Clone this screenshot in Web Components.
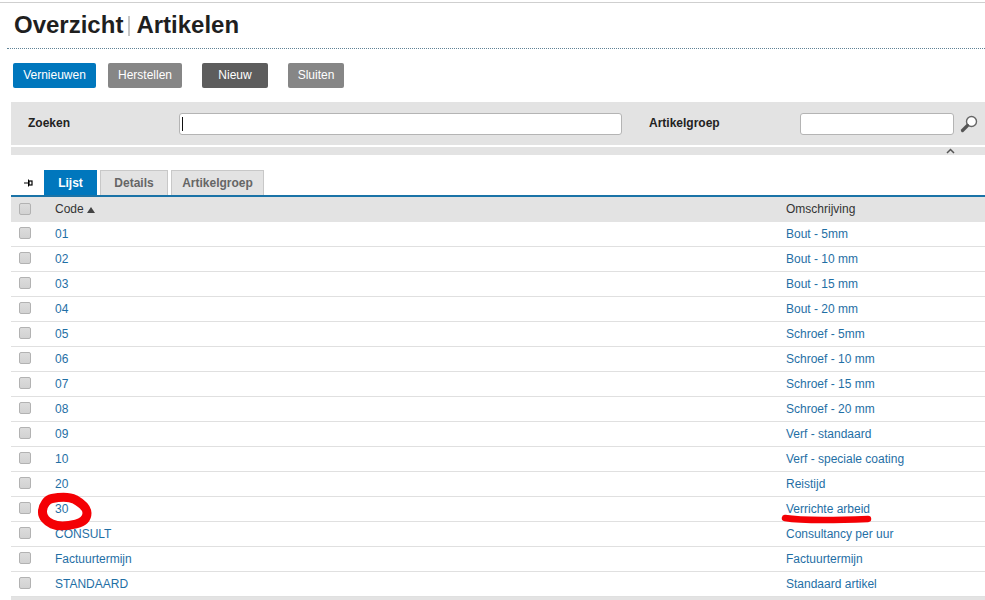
<!DOCTYPE html>
<html lang="nl">
<head>
<meta charset="utf-8">
<title>Overzicht Artikelen</title>
<style>
html, body { margin: 0; padding: 0; background: #fff; overflow: hidden; }
body { font-family: "Liberation Sans", Arial, sans-serif; font-size: 12px; color: #222; }
</style>
</head>
<body>
<artikel-page></artikel-page>
<script>
class PageTitle extends HTMLElement {
    constructor() {
        super();
        this.attachShadow({ mode: 'open' });
        this.shadowRoot.innerHTML = `
        <style>
        :host {
            display: block;
            height: 46px;
            margin-left: 7px;
            border-bottom: 1px dotted #5f8296;
            box-sizing: border-box;
        }
        h1 {
            display: flex;
            align-items: center;
            margin: 0;
            padding: 8px 0 0 7px;
            font-size: 24px;
            line-height: 28px;
            font-weight: bold;
            color: #1f1f1f;
        }
        i { display: block; width: 2px; height: 20px; background: #c6c6c6; margin: 2px 6px 0 5px; }
        </style>
        <h1><slot name="first"></slot><i></i><slot name="second"></slot></h1>`;
    }
}
customElements.define('page-title', PageTitle);

class ToolButton extends HTMLElement {
    constructor() {
        super();
        this.attachShadow({ mode: 'open' });
        this.shadowRoot.innerHTML = `
        <style>
        :host {
            display: flex;
            align-items: center;
            justify-content: center;
            height: 25px;
            box-sizing: border-box;
            border-radius: 2px;
            background: #868686;
            color: #fff;
            font-size: 12px;
            padding-bottom: 2px;
        }
        :host([kind="primary"]) { background: #0077bd; }
        :host([kind="dark"]) { background: #5d5d5d; }
        </style>
        <slot></slot>`;
    }
}
customElements.define('tool-button', ToolButton);

class SearchPanel extends HTMLElement {
    constructor() {
        super();
        this.attachShadow({ mode: 'open' });
        this.shadowRoot.innerHTML = `
        <style>
        :host { display: block; margin: 14px 0 0 11px; }
        .panel {
            height: 43px;
            background: #e3e3e3;
            display: flex;
            align-items: center;
            font-size: 12px;
            font-weight: bold;
            color: #222;
        }
        .lbl1 { width: 168px; padding-left: 17px; box-sizing: border-box; flex: none; margin-bottom: 1px; }
        .field {
            height: 22px;
            box-sizing: border-box;
            background: #fff;
            border: 1px solid #b4b4b4;
            border-radius: 3px;
            flex: none;
            padding: 3px 2px;
        }
        .field i { display: block; width: 1px; height: 14px; background: #111; }
        .wide { width: 443px; }
        .lbl2 { width: 178px; padding-left: 27px; box-sizing: border-box; flex: none; margin-bottom: 1px; }
        .narrow { width: 154px; }
        .lens { margin-left: 6px; flex: none; }
        .strip {
            height: 8px;
            margin-top: 2px;
            background: #e3e3e3;
            position: relative;
        }
        .caret { position: absolute; left: 935px; top: 1px; }
        </style>
        <div class="panel">
            <div class="lbl1">Zoeken</div>
            <div class="field wide"><i></i></div>
            <div class="lbl2">Artikelgroep</div>
            <div class="field narrow"></div>
            <svg class="lens" width="18" height="18" viewBox="0 0 18 18">
                <circle cx="11.5" cy="6.5" r="5" fill="#fff" stroke="#666" stroke-width="1.4"/>
                <path d="M7.5 10.5 L2.5 15.5" stroke="#555" stroke-width="3.2" stroke-linecap="round"/>
            </svg>
        </div>
        <div class="strip">
            <svg class="caret" width="9" height="6" viewBox="0 0 9 6"><path d="M1 5 L4.5 1.5 L8 5" fill="none" stroke="#555" stroke-width="1.5"/></svg>
        </div>`;
    }
}
customElements.define('search-panel', SearchPanel);

class TabBar extends HTMLElement {
    constructor() {
        super();
        this.attachShadow({ mode: 'open' });
        this.shadowRoot.innerHTML = `
        <style>
        :host {
            display: flex;
            align-items: flex-end;
            height: 27px;
            margin: 15px 0 0 11px;
            border-bottom: 2px solid #1a73a7;
            box-sizing: border-box;
        }
        .pin { width: 33px; height: 25px; display: flex; align-items: center; padding-left: 13px; box-sizing: border-box; flex: none; }
        .tab {
            height: 25px;
            box-sizing: border-box;
            display: flex;
            align-items: center;
            justify-content: center;
            font-size: 12px;
            font-weight: bold;
            color: #666;
            background: #e3e3e3;
            border: 1px solid #c8c8c8;
            border-bottom: 0;
            margin-right: 3px;
            flex: none;
        }
        .active { background: #0077bd; color: #fff; border-color: #0077bd; }
        </style>
        <div class="pin">
            <svg width="9" height="8" viewBox="0 0 9 8"><path d="M0 4 H4 M4.5 0.5 V7.5" fill="none" stroke="#000" stroke-width="1"/><rect x="5" y="2" width="3" height="4" fill="#fff" stroke="#000" stroke-width="1.2"/></svg>
        </div>
        <div class="tab active" style="width:53px">Lijst</div>
        <div class="tab" style="width:68px">Details</div>
        <div class="tab" style="width:93px">Artikelgroep</div>`;
    }
}
customElements.define('tab-bar', TabBar);

class RowCheck extends HTMLElement {
    constructor() {
        super();
        this.attachShadow({ mode: 'open' });
        this.shadowRoot.innerHTML = `
        <style>
        :host {
            display: block;
            width: 12px;
            height: 12px;
            box-sizing: border-box;
            border: 1px solid #b2b2b2;
            border-radius: 2px;
            background: linear-gradient(#dcdcdc, #d2d2d2);
        }
        </style>`;
    }
}
customElements.define('row-check', RowCheck);

class GridRow extends HTMLElement {
    constructor() {
        super();
        this.attachShadow({ mode: 'open' });
        this.shadowRoot.innerHTML = `
        <style>
        :host {
            display: grid;
            grid-template-columns: 44px 731px 1fr;
            align-items: center;
            height: 25px;
            box-sizing: border-box;
            border-bottom: 1px solid #e0e0e0;
            font-size: 12px;
            color: #1f6fa5;
        }
        :host([head]) {
            background: #e3e3e3;
            color: #333;
            border-bottom: 0;
        }
        :host([head]) .cell { margin-bottom: 2px; }
        row-check { margin-left: 8px; margin-bottom: 2px; }
        .cell { white-space: nowrap; }
        </style>
        <row-check></row-check>
        <div class="cell"><slot name="code"></slot></div>
        <div class="cell"><slot name="desc"></slot></div>`;
    }
}
customElements.define('grid-row', GridRow);

const ROWS = [
    ['01', 'Bout - 5mm'],
    ['02', 'Bout - 10 mm'],
    ['03', 'Bout - 15 mm'],
    ['04', 'Bout - 20 mm'],
    ['05', 'Schroef - 5mm'],
    ['06', 'Schroef - 10 mm'],
    ['07', 'Schroef - 15 mm'],
    ['08', 'Schroef - 20 mm'],
    ['09', 'Verf - standaard'],
    ['10', 'Verf - speciale coating'],
    ['20', 'Reistijd'],
    ['30', 'Verrichte arbeid'],
    ['CONSULT', 'Consultancy per uur'],
    ['Factuurtermijn', 'Factuurtermijn'],
    ['STANDAARD', 'Standaard artikel']
];

class ArtikelGrid extends HTMLElement {
    constructor() {
        super();
        this.attachShadow({ mode: 'open' });
        const rows = ROWS.map(r => `<grid-row><span slot="code">${r[0]}</span><span slot="desc">${r[1]}</span></grid-row>`).join('');
        this.shadowRoot.innerHTML = `
        <style>
        :host { display: block; margin-left: 11px; }
        .foot { height: 3px; background: #e3e3e3; }
        .arrow { display: inline-block; width: 0; height: 0; border: 4px solid transparent; border-top: 0; border-bottom: 6px solid #444; margin-left: 3px; vertical-align: 0; }
        </style>
        <grid-row head><span slot="code">Code<i class="arrow"></i></span><span slot="desc">Omschrijving</span></grid-row>
        ${rows}
        <div class="foot"></div>`;
    }
}
customElements.define('artikel-grid', ArtikelGrid);

class ArtikelPage extends HTMLElement {
    constructor() {
        super();
        this.attachShadow({ mode: 'open' });
        this.shadowRoot.innerHTML = `
        <style>
        :host { display: block; position: relative; width: 985px; height: 600px; overflow: hidden; padding-top: 2px; box-sizing: border-box; }
        .rule { height: 1px; background: #cfcfcf; }
        .bar { display: flex; margin: 14px 0 0 13px; }
        .marks { position: absolute; left: 0; top: 0; pointer-events: none; }
        </style>
        <div class="rule"></div>
        <page-title><span slot="first">Overzicht</span><span slot="second">Artikelen</span></page-title>
        <div class="bar">
            <tool-button kind="primary" style="width:83px;margin-right:12px">Vernieuwen</tool-button>
            <tool-button style="width:74px;margin-right:20px">Herstellen</tool-button>
            <tool-button kind="dark" style="width:66px;margin-right:20px">Nieuw</tool-button>
            <tool-button style="width:56px">Sluiten</tool-button>
        </div>
        <search-panel></search-panel>
        <tab-bar></tab-bar>
        <artikel-grid></artikel-grid>
        <svg class="marks" width="985" height="600" viewBox="0 0 985 600">
            <path d="M42.5 511 C43 505 47 499.5 52 498.5 C60 497 70 497 75 499.5 C81 503 87 508 87 513 C87 519 82 522.5 76 524 C68 526 58 526.5 52 524 C47 522 42 517 42.5 511 Z" fill="none" stroke="#f40004" stroke-width="9" stroke-linejoin="round"/>
            <path d="M785 518 C800 520.5 830 520.5 868 519" fill="none" stroke="#f40004" stroke-width="6.5" stroke-linecap="round"/>
        </svg>`;
    }
}
customElements.define('artikel-page', ArtikelPage);
</script>
</body>
</html>
